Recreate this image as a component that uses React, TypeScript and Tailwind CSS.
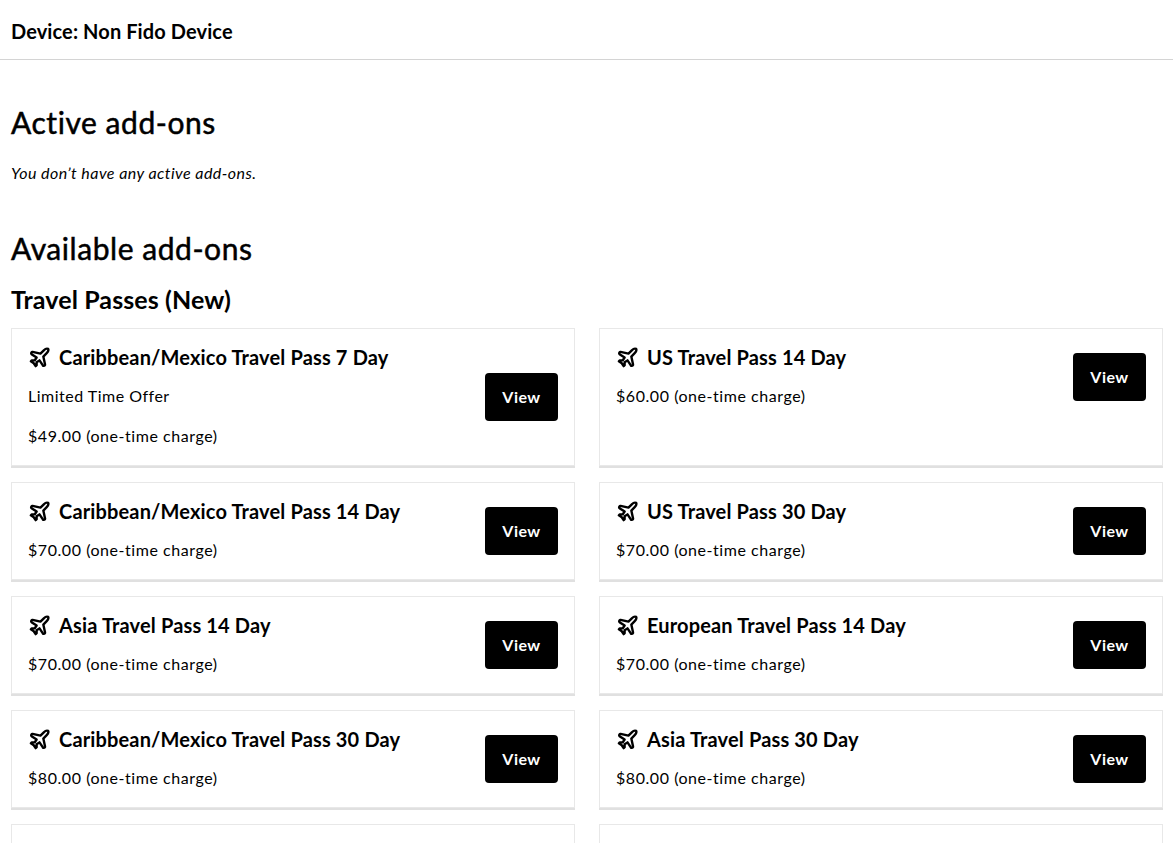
import { Plane } from 'lucide-react'

interface Pass {
  name: string
  price: string
  note?: string
}

const passes: Pass[] = [
  { name: 'Caribbean/Mexico Travel Pass 7 Day', price: '$49.00', note: 'Limited Time Offer' },
  { name: 'US Travel Pass 14 Day', price: '$60.00' },
  { name: 'Caribbean/Mexico Travel Pass 14 Day', price: '$70.00' },
  { name: 'US Travel Pass 30 Day', price: '$70.00' },
  { name: 'Asia Travel Pass 14 Day', price: '$70.00' },
  { name: 'European Travel Pass 14 Day', price: '$70.00' },
  { name: 'Caribbean/Mexico Travel Pass 30 Day', price: '$80.00' },
  { name: 'Asia Travel Pass 30 Day', price: '$80.00' },
  { name: 'European Travel Pass 30 Day', price: '$90.00' },
  { name: 'Global Travel Pass 30 Day', price: '$100.00' },
]

function PassCard({ pass }: { pass: Pass }) {
  return (
    <div className="border border-[#e8e8e8] px-4 pt-4 pb-[17px] shadow-[0_2px_0_#e0e0e0]">
      <div className="flex items-center justify-between">
        <div>
          <div className="flex h-[24px] items-center gap-[8px] text-[20px] font-bold leading-[23px] tracking-[0.15px]">
            <Plane className="mt-[1px] h-[23px] w-[23px]" strokeWidth={2.5} />
            <span>{pass.name}</span>
          </div>
          {pass.note && <p className="mt-[15px] text-[16px] leading-[24px] tracking-[0.5px]">{pass.note}</p>}
          <p className={`${pass.note ? 'mt-[16px]' : 'mt-[15px]'} text-[16px] leading-[24px] tracking-[0.55px]`}>
            {pass.price} (one-time charge)
          </p>
        </div>
        <button className="flex h-[48px] w-[73px] items-center justify-center rounded-[4px] bg-black text-[16px] font-bold tracking-[0.5px] text-white">
          View
        </button>
      </div>
    </div>
  )
}

export default function App() {
  return (
    <div className="h-screen overflow-hidden bg-white font-['Lato',sans-serif] text-black">
      <div className="flex h-[60px] items-center border-b border-[#d4d4d4] px-[11px] pt-[3px] text-[20px] font-bold tracking-[0.1px]">
        Device: Non Fido Device
      </div>
      <div className="pl-[11px] pr-[10px]">
        <h2 className="mt-[42px] text-[30px] font-normal leading-[40px] tracking-[0.55px] [-webkit-text-stroke:0.5px_black]">Active add-ons</h2>
        <p className="mt-[19px] text-[16px] italic leading-[24px] tracking-[0.45px]">You don’t have any active add-ons.</p>
        <h2 className="mt-[43px] text-[30px] font-normal leading-[40px] tracking-[0.55px] [-webkit-text-stroke:0.5px_black]">Available add-ons</h2>
        <h3 className="mt-[16px] text-[25px] font-bold leading-[30px] tracking-[0.1px]">Travel Passes (New)</h3>
        <div className="mt-[14px] grid grid-cols-2 gap-x-[24px] gap-y-[16px]">
          {passes.map((pass) => (
            <PassCard key={pass.name} pass={pass} />
          ))}
        </div>
      </div>
    </div>
  )
}
